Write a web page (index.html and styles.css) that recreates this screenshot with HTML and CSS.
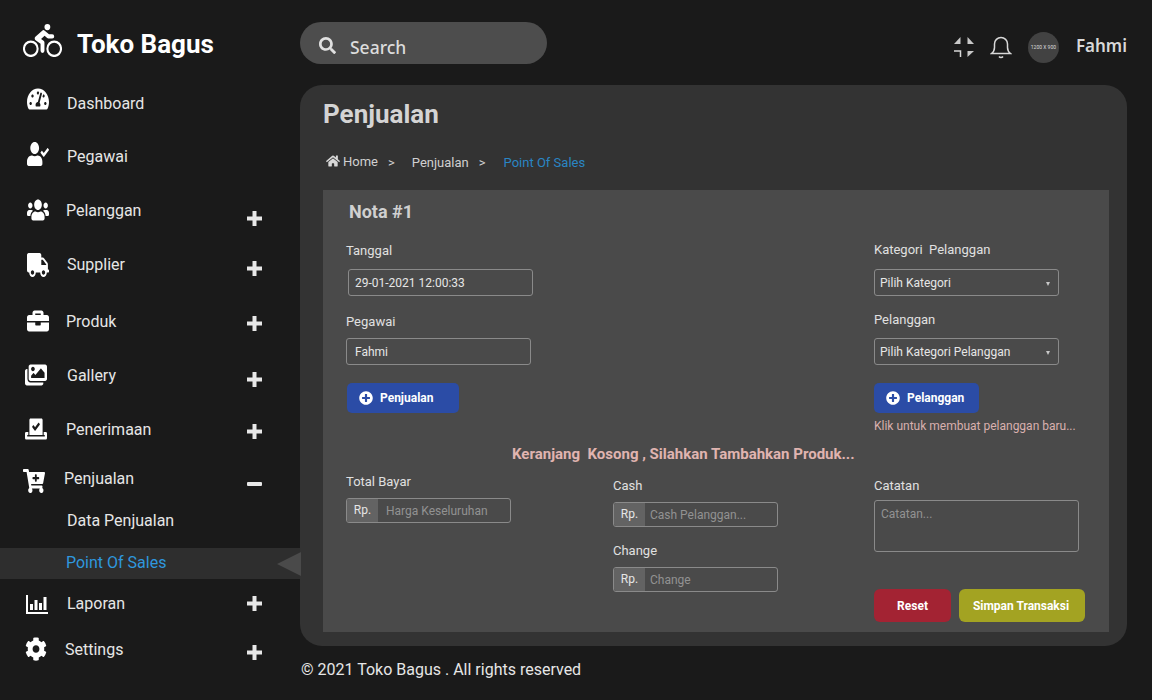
FILE: index.html
```html
<!DOCTYPE html>
<html lang="en">
<head>
  <meta charset="UTF-8">
  <meta name="viewport" content="width=device-width, initial-scale=1.0">
  <title>Toko Bagus - Point Of Sales</title>
  <link rel="stylesheet" href="styles.css">
</head>
<body>
  <svg class="sprites" aria-hidden="true">
    <symbol id="plus" viewBox="0 0 16 16"><path d="M6.500 1h4v5.500H16v4h-5.500V16h-4v-5.500H1v-4h5.500z"/></symbol>
    <symbol id="minus" viewBox="0 0 16 16"><rect x="1" y="6" width="15" height="4" rx="1"/></symbol>
    <symbol id="plus-circle" viewBox="0 0 512 512"><path d="M256 8C119 8 8 119 8 256s111 248 248 248 248-111 248-248S393 8 256 8zm144 276c0 6.6-5.4 12-12 12h-92v92c0 6.6-5.4 12-12 12h-56c-6.6 0-12-5.4-12-12v-92h-92c-6.6 0-12-5.4-12-12v-56c0-6.6 5.4-12 12-12h92v-92c0-6.6 5.4-12 12-12h56c6.6 0 12 5.4 12 12v92h92c6.6 0 12 5.4 12 12v56z"/></symbol>
  </svg>

  <div class="app">
    <aside class="sidebar">
      <div class="brand">
        <svg class="brand-icon" viewBox="0 0 640 512" preserveAspectRatio="none">
          <path d="M400 96a48 48 0 1 0-48-48 48 48 0 0 0 48 48zm-4 121a31.9 31.9 0 0 0 20 7h64a32 32 0 0 0 0-64h-52.78L356 103a31.94 31.94 0 0 0-40.81.68l-112 96a32 32 0 0 0 3.08 50.92L288 305.12V416a32 32 0 0 0 64 0V288a32 32 0 0 0-14.25-26.62l-41.36-27.57 58.25-49.92z"/>
          <circle class="brand-wheel" cx="128" cy="384" r="112"/>
          <circle class="brand-wheel" cx="512" cy="384" r="112"/>
        </svg>
        <span class="brand-name">Toko Bagus</span>
      </div>

      <nav class="nav">
        <a class="nav-item nav-dashboard">
          <svg class="nav-icon" viewBox="0 0 576 512" preserveAspectRatio="none"><path d="M288 32C128.94 32 0 160.94 0 320c0 52.8 14.25 102.26 39.06 144.8 5.61 9.62 16.3 15.2 27.44 15.2h443c11.14 0 21.83-5.58 27.44-15.2C561.75 422.26 576 372.8 576 320c0-159.06-128.94-288-288-288zm0 64c14.71 0 26.58 10.13 30.32 23.65-1.11 2.26-2.64 4.23-3.45 6.67l-9.22 27.67c-5.13 3.49-10.97 6.01-17.64 6.01-17.67 0-32-14.33-32-32S270.33 96 288 96zM96 384c-17.67 0-32-14.33-32-32s14.33-32 32-32 32 14.33 32 32-14.33 32-32 32zm48-160c-17.67 0-32-14.33-32-32s14.33-32 32-32 32 14.33 32 32-14.33 32-32 32zm246.77-72.41l-61.33 184C343.13 347.33 352 364.54 352 384c0 11.72-3.38 22.55-8.88 32H232.88c-5.5-9.45-8.88-20.28-8.88-32 0-33.94 26.5-61.43 59.9-63.59l61.34-184.01c4.17-12.56 17.73-19.45 30.36-15.17 12.57 4.19 19.35 17.79 15.17 30.36zm14.66 57.2l15.52-46.55c3.47-1.29 7.13-2.23 11.05-2.23 17.67 0 32 14.33 32 32s-14.33 32-32 32c-11.38-.01-20.89-6.28-26.57-15.22zM480 384c-17.67 0-32-14.33-32-32s14.33-32 32-32 32 14.33 32 32-14.33 32-32 32z"/></svg>
          <span class="nav-label">Dashboard</span>
        </a>
        <a class="nav-item nav-pegawai">
          <svg class="nav-icon" viewBox="0 0 640 512" preserveAspectRatio="none"><path d="M224 256c70.7 0 128-57.3 128-128S294.7 0 224 0 96 57.3 96 128s57.3 128 128 128zm89.6 32h-16.7c-22.2 10.2-46.9 16-72.9 16s-50.6-5.8-72.9-16h-16.7C60.2 288 0 348.2 0 422.4V464c0 26.5 21.5 48 48 48h352c26.5 0 48-21.5 48-48v-41.6c0-74.2-60.2-134.4-134.4-134.4zm323-128.4l-27.8-28.1c-4.6-4.7-12.1-4.7-16.8-.1l-104.8 104-45.5-45.8c-4.6-4.7-12.1-4.7-16.8-.1l-28.1 27.9c-4.7 4.6-4.7 12.1-.1 16.8l81.7 82.3c4.6 4.7 12.1 4.7 16.8.1l141.3-140.2c4.6-4.7 4.7-12.2.1-16.8z"/></svg>
          <span class="nav-label">Pegawai</span>
        </a>
        <a class="nav-item nav-pelanggan">
          <svg class="nav-icon" viewBox="0 0 640 512" preserveAspectRatio="none"><path d="M96 224c35.3 0 64-28.7 64-64s-28.7-64-64-64-64 28.7-64 64 28.7 64 64 64zm448 0c35.3 0 64-28.7 64-64s-28.7-64-64-64-64 28.7-64 64 28.7 64 64 64zm32 32h-64c-17.6 0-33.5 7.1-45.1 18.6 40.3 22.1 68.9 62 75.1 109.4h66c17.7 0 32-14.3 32-32v-32c0-35.3-28.7-64-64-64zm-256 0c61.9 0 112-50.1 112-112S381.9 32 320 32 208 82.1 208 144s50.1 112 112 112zm76.8 32h-8.3c-20.8 10-43.9 16-68.5 16s-47.6-6-68.5-16h-8.3C179.6 288 128 339.6 128 403.2V432c0 26.5 21.5 48 48 48h288c26.5 0 48-21.5 48-48v-28.8c0-63.6-51.6-115.2-115.2-115.2zm-223.7-13.4C161.5 263.1 145.6 256 128 256H64c-35.3 0-64 28.7-64 64v32c0 17.7 14.3 32 32 32h65.9c6.3-47.4 34.9-87.3 75.2-109.4z"/></svg>
          <span class="nav-label">Pelanggan</span>
          <svg class="nav-toggle"><use href="#plus"/></svg>
        </a>
        <a class="nav-item nav-supplier">
          <svg class="nav-icon" viewBox="0 0 640 512" preserveAspectRatio="none"><path d="M624 352h-16V243.9c0-12.7-5.1-24.9-14.1-33.9L494 110.1c-9-9-21.2-14.1-33.9-14.1H416V48c0-26.5-21.5-48-48-48H48C21.5 0 0 21.5 0 48v320c0 26.5 21.5 48 48 48h16c0 53 43 96 96 96s96-43 96-96h128c0 53 43 96 96 96s96-43 96-96h48c8.8 0 16-7.2 16-16v-32c0-8.8-7.2-16-16-16zM160 464c-26.5 0-48-21.5-48-48s21.5-48 48-48 48 21.5 48 48-21.5 48-48 48zm320 0c-26.5 0-48-21.5-48-48s21.5-48 48-48 48 21.5 48 48-21.5 48-48 48zm80-208H416V144h44.1l99.9 99.9V256z"/></svg>
          <span class="nav-label">Supplier</span>
          <svg class="nav-toggle"><use href="#plus"/></svg>
        </a>
        <a class="nav-item nav-produk">
          <svg class="nav-icon" viewBox="0 0 512 512" preserveAspectRatio="none"><path d="M320 336c0 8.84-7.16 16-16 16h-96c-8.84 0-16-7.16-16-16v-48H0v144c0 25.6 22.4 48 48 48h416c25.6 0 48-22.4 48-48V288H320v48zm144-208h-80V80c0-25.6-22.4-48-48-48H176c-25.6 0-48 22.4-48 48v48H48c-25.6 0-48 22.4-48 48v80h512v-80c0-25.6-22.4-48-48-48zm-144 0H192V96h128v32z"/></svg>
          <span class="nav-label">Produk</span>
          <svg class="nav-toggle"><use href="#plus"/></svg>
        </a>
        <a class="nav-item nav-gallery">
          <svg class="nav-icon" viewBox="0 0 576 512" preserveAspectRatio="none"><path d="M480 416v16c0 26.51-21.49 48-48 48H48c-26.51 0-48-21.49-48-48V176c0-26.51 21.49-48 48-48h16v208c0 44.112 35.888 80 80 80h336zm96-80V80c0-26.51-21.49-48-48-48H144c-26.51 0-48 21.49-48 48v256c0 26.51 21.49 48 48 48h384c26.51 0 48-21.49 48-48zM256 128c0 26.51-21.49 48-48 48s-48-21.49-48-48 21.49-48 48-48 48 21.49 48 48zm-96 144l55.515-55.515c4.686-4.686 12.284-4.686 16.971 0L272 256l135.515-135.515c4.686-4.686 12.284-4.686 16.971 0L512 208v112H160v-48z"/></svg>
          <span class="nav-label">Gallery</span>
          <svg class="nav-toggle"><use href="#plus"/></svg>
        </a>
        <a class="nav-item nav-penerimaan">
          <svg class="nav-icon" viewBox="0 0 640 512" preserveAspectRatio="none"><path d="M608 320h-64v64h22.4c5.3 0 9.6 3.6 9.6 8v16c0 4.4-4.3 8-9.6 8H73.6c-5.3 0-9.6-3.6-9.6-8v-16c0-4.4 4.3-8 9.6-8H96v-64H32c-17.7 0-32 14.3-32 32v96c0 17.7 14.3 32 32 32h576c17.7 0 32-14.3 32-32v-96c0-17.7-14.3-32-32-32zm-96 64V64.3c0-17.9-14.5-32.3-32.3-32.3H160.4C142.5 32 128 46.5 128 64.3V384h384zM211.2 202l25.5-25.3c4.2-4.2 11-4.2 15.2.1l41.3 41.6 95.2-94.4c4.2-4.2 11-4.2 15.2.1l25.3 25.5c4.2 4.2 4.2 11-.1 15.2L300.5 292c-4.2 4.2-11 4.2-15.2-.1l-74.1-74.7c-4.2-4.2-4.2-11 0-15.2z"/></svg>
          <span class="nav-label">Penerimaan</span>
          <svg class="nav-toggle"><use href="#plus"/></svg>
        </a>
        <a class="nav-item nav-penjualan">
          <svg class="nav-icon" viewBox="0 0 576 512" preserveAspectRatio="none"><path d="M504.717 320H211.572l6.545 32h268.418c15.401 0 26.816 14.301 23.403 29.319l-5.517 24.276C523.112 414.668 536 433.828 536 456c0 31.202-25.519 56.444-56.824 55.994-29.823-.429-54.35-24.631-55.155-54.447-.44-16.287 6.085-31.049 16.803-41.548H231.176C241.553 426.165 248 440.326 248 456c0 31.813-26.528 57.431-58.67 55.938-28.54-1.325-51.751-24.385-53.251-52.917-1.158-22.034 10.436-41.455 28.051-51.586L93.883 64H24C10.745 64 0 53.255 0 40V24C0 10.745 10.745 0 24 0h102.529c11.401 0 21.228 8.021 23.513 19.19L159.208 64H551.99c15.401 0 26.816 14.301 23.403 29.319l-47.273 208C525.637 312.246 515.923 320 504.717 320zM408 168h-48v-40c0-8.837-7.163-16-16-16h-16c-8.837 0-16 7.163-16 16v40h-48c-8.837 0-16 7.163-16 16v16c0 8.837 7.163 16 16 16h48v40c0 8.837 7.163 16 16 16h16c8.837 0 16-7.163 16-16v-40h48c8.837 0 16-7.163 16-16v-16c0-8.837-7.163-16-16-16z"/></svg>
          <span class="nav-label">Penjualan</span>
          <svg class="nav-toggle"><use href="#minus"/></svg>
        </a>
        <a class="nav-item nav-sub">Data Penjualan</a>
        <a class="nav-item nav-active">Point Of Sales</a>
        <a class="nav-item nav-laporan">
          <svg class="nav-icon" viewBox="0 0 22 19"><path d="M0 0h2v17h20v2H0z"/><path d="M4 9h3v6H4zM8.500 5h3v10h-3zM13 8h3v7h-3zM17.500 2h3v13h-3z"/></svg>
          <span class="nav-label">Laporan</span>
          <svg class="nav-toggle"><use href="#plus"/></svg>
        </a>
        <a class="nav-item nav-settings">
          <svg class="nav-icon" viewBox="0 0 512 512" preserveAspectRatio="none"><path d="M487.4 315.7l-42.6-24.6c4.300-23.200 4.300-47 0-70.200l42.600-24.600c4.900-2.800 7.100-8.600 5.500-14-11.100-35.600-30-67.800-54.700-94.600-3.800-4.100-10-5.100-14.800-2.300L380.800 110c-17.900-15.400-38.500-27.300-60.800-35.100V25.800c0-5.600-3.900-10.500-9.400-11.700-36.700-8.200-74.300-7.800-109.200 0-5.500 1.200-9.400 6.100-9.400 11.700V75c-22.200 7.900-42.800 19.800-60.800 35.100L88.700 85.500c-4.900-2.800-11-1.900-14.800 2.300-24.700 26.700-43.600 58.900-54.700 94.600-1.700 5.400.6 11.200 5.500 14L67.300 221c-4.300 23.200-4.300 47 0 70.200l-42.600 24.600c-4.900 2.800-7.100 8.600-5.500 14 11.100 35.600 30 67.800 54.700 94.600 3.800 4.100 10 5.100 14.800 2.300l42.600-24.600c17.900 15.400 38.500 27.300 60.800 35.100v49.200c0 5.600 3.900 10.500 9.400 11.700 36.700 8.200 74.300 7.800 109.200 0 5.500-1.200 9.400-6.100 9.400-11.700v-49.200c22.200-7.900 42.800-19.800 60.800-35.100l42.600 24.600c4.900 2.800 11 1.900 14.800-2.300 24.700-26.700 43.600-58.900 54.700-94.600 1.500-5.500-.7-11.300-5.600-14.100zM256 336c-44.100 0-80-35.900-80-80s35.900-80 80-80 80 35.900 80 80-35.900 80-80 80z"/></svg>
          <span class="nav-label">Settings</span>
          <svg class="nav-toggle"><use href="#plus"/></svg>
        </a>
      </nav>
    </aside>

    <div class="main">
      <header class="topbar">
        <div class="search">
          <svg class="search-icon" viewBox="0 0 512 512"><path d="M505 442.700L405.300 343c-4.500-4.500-10.600-7-17-7H372c27.600-35.300 44-79.700 44-128C416 93.100 322.900 0 208 0S0 93.100 0 208s93.100 208 208 208c48.300 0 92.700-16.400 128-44v16.300c0 6.400 2.500 12.500 7 17l99.700 99.700c9.400 9.400 24.600 9.400 33.900 0l28.300-28.300c9.400-9.400 9.400-24.600.1-34zM208 336c-70.700 0-128-57.200-128-128 0-70.700 57.200-128 128-128 70.700 0 128 57.200 128 128 0 70.700-57.200 128-128 128z"/></svg>
          <span class="search-text">Search</span>
        </div>
        <div class="topbar-right">
          <svg class="top-icon" viewBox="0 0 22 22">
            <path class="compress-fill" d="M7.500 1v7H1z"/>
            <path class="compress-fill" d="M14.500 1v7H21z"/>
            <path class="compress-line" d="M1 15h6.500v6"/>
            <path class="compress-fill" d="M14.500 21v-6H21z"/>
          </svg>
          <svg class="top-icon bell" viewBox="0 0 22 24">
            <path class="bell-line" d="M1.500 18.500c2-1.500 3-3 3-6V9a6.500 6.500 0 0 1 13 0v3.500c0 3 1 4.500 3 6z"/>
            <path class="bell-line" d="M9 21.500c1 1.300 3 1.300 4 0"/>
          </svg>
          <div class="avatar">1200 X 900</div>
          <span class="user-name">Fahmi</span>
        </div>
      </header>

      <main class="panel">
        <h1 class="page-title">Penjualan</h1>
        <div class="breadcrumb">
          <svg class="home-icon" viewBox="0 0 576 512"><path d="M280.370 148.260L96 300.110V464a16 16 0 0 0 16 16l112.060-.290a16 16 0 0 0 15.920-16V368a16 16 0 0 1 16-16h64a16 16 0 0 1 16 16v95.640a16 16 0 0 0 16 16.050L464 480a16 16 0 0 0 16-16V300L295.670 148.260a12.190 12.190 0 0 0-15.300 0zM571.600 251.470L488 182.560V44.050a12 12 0 0 0-12-12h-56a12 12 0 0 0-12 12v72.610L318.470 43a48 48 0 0 0-61 0L4.340 251.470a12 12 0 0 0-1.600 16.900l25.500 31A12 12 0 0 0 45.150 301l235.220-193.740a12.190 12.190 0 0 1 15.300 0L530.900 301a12 12 0 0 0 16.900-1.600l25.500-31a12 12 0 0 0-1.700-16.930z"/></svg>
          <span class="crumb-home">Home</span>
          <span class="crumb-sep crumb-sep-first">&gt;</span>
          <span class="crumb">Penjualan</span>
          <span class="crumb-sep">&gt;</span>
          <span class="crumb crumb-current">Point Of Sales</span>
        </div>

        <section class="card">
          <h2 class="card-title">Nota #1</h2>

          <div class="form-top">
            <div class="col-left">
              <label class="field-label label-tanggal">Tanggal</label>
              <input class="text-input input-tanggal" type="text" value="29-01-2021 12:00:33">
              <label class="field-label label-pegawai">Pegawai</label>
              <input class="text-input" type="text" value="Fahmi">
              <button class="btn btn-blue btn-penjualan" type="button">
                <svg class="btn-icon"><use href="#plus-circle"/></svg>Penjualan
              </button>
            </div>
            <div class="col-right">
              <label class="field-label label-kategori">Kategori&nbsp; Pelanggan</label>
              <div class="select-box"><span>Pilih Kategori</span></div>
              <label class="field-label label-pelanggan">Pelanggan</label>
              <div class="select-box"><span>Pilih Kategori Pelanggan</span></div>
              <button class="btn btn-blue btn-pelanggan" type="button">
                <svg class="btn-icon"><use href="#plus-circle"/></svg>Pelanggan
              </button>
              <p class="hint">Klik untuk membuat pelanggan baru...</p>
            </div>
          </div>

          <p class="empty-note">Keranjang&nbsp; Kosong , Silahkan Tambahkan Produk...</p>

          <div class="form-bottom">
            <div class="col-total">
              <label class="field-label">Total Bayar</label>
              <div class="money-input">
                <span class="money-prefix">Rp.</span>
                <input type="text" placeholder="Harga Keseluruhan">
              </div>
            </div>
            <div class="col-cash">
              <label class="field-label">Cash</label>
              <div class="money-input">
                <span class="money-prefix">Rp.</span>
                <input type="text" placeholder="Cash Pelanggan...">
              </div>
              <label class="field-label label-change">Change</label>
              <div class="money-input">
                <span class="money-prefix">Rp.</span>
                <input type="text" placeholder="Change">
              </div>
            </div>
            <div class="col-note">
              <label class="field-label">Catatan</label>
              <textarea class="note-input" placeholder="Catatan..."></textarea>
              <div class="actions">
                <button class="btn btn-reset" type="button">Reset</button>
                <button class="btn btn-save" type="button">Simpan Transaksi</button>
              </div>
            </div>
          </div>
        </section>
      </main>

      <footer class="footer">© 2021 Toko Bagus . All rights reserved</footer>
    </div>
  </div>
</body>
</html>
```

FILE: styles.css
```css
* {
  box-sizing: border-box;
}
body {
  margin: 0;
  height: 700px;
  overflow: hidden;
  background-color: #1a1a1a;
  color: #e6e6e6;
  font-family: Roboto, "Liberation Sans", sans-serif;
  font-size: 16px;
}
.sprites {
  display: none;
}
.app {
  display: flex;
  height: 700px;
}

/* sidebar */
.sidebar {
  width: 300px;
  flex-shrink: 0;
}
.brand {
  display: flex;
  align-items: center;
  height: 33px;
  margin: 24px 0 0 23px;
}
.brand-icon {
  width: 39px;
  height: 33px;
  fill: #fff;
  margin-right: 15px;
}
.brand-wheel {
  fill: none;
  stroke: #fff;
  stroke-width: 34;
}
.brand-name {
  margin-top: 6px;
  color: #fff;
  font-size: 26px;
  font-weight: 700;
}
.nav {
  display: flex;
  flex-direction: column;
  padding-top: 31px;
}
.nav-item {
  position: relative;
  display: flex;
  align-items: center;
  height: 30px;
  margin-top: 24px;
  padding-right: 38px;
  color: #e6e6e6;
}
.nav-icon {
  width: 22px;
  height: 24px;
  flex-shrink: 0;
  fill: #fff;
}
.nav-toggle {
  width: 16px;
  height: 16px;
  margin-left: auto;
  fill: #e8e8e8;
}

.nav-dashboard { margin-top: 0; padding-left: 27px; }
.nav-dashboard .nav-icon { margin-top: -9px; }
.nav-pegawai .nav-icon { margin-top: -4px; }
.nav-dashboard .nav-label,
.nav-pegawai .nav-label,
.nav-supplier .nav-label { margin-left: 18px; }

.nav-pegawai { margin-top: 23px; padding-left: 27px; }
.nav-pelanggan { padding-left: 27px; }
.nav-pelanggan .nav-label { margin-left: 17px; }
.nav-pelanggan .nav-toggle { margin-top: 16px; }
.nav-supplier { padding-left: 27px; }
.nav-supplier .nav-icon { margin-top: 2px; }
.nav-supplier .nav-toggle { margin-top: 8px; }
.nav-produk { margin-top: 27px; padding-left: 27px; }
.nav-produk .nav-label { margin-left: 17px; }
.nav-produk .nav-toggle { margin-top: 4px; }
.nav-gallery { padding-left: 25px; }
.nav-gallery .nav-label { margin-left: 20px; }
.nav-gallery .nav-toggle { margin-top: 8px; }
.nav-penerimaan { padding-left: 25px; }
.nav-penerimaan .nav-label { margin-left: 19px; }
.nav-penerimaan .nav-toggle { margin-top: 4px; }
.nav-penjualan { margin-top: 19px; padding-left: 23px; }
.nav-penjualan .nav-icon { margin-top: 6px; }
.nav-penjualan .nav-label { margin-left: 19px; }
.nav-penjualan .nav-toggle { margin-top: 12px; }
.nav-sub { margin-top: 12px; padding-left: 67px; }
.nav-active {
  height: 31px;
  margin-top: 13px;
  padding-left: 66px;
  padding-bottom: 2px;
  background-color: #2e2e2e;
  color: #2f97de;
}
/* little arrow that points from the panel at the open page */
.nav-active::after {
  content: "";
  position: absolute;
  top: 4px;
  right: -1px;
  border-style: solid;
  border-width: 12.5px 24px 12.5px 0;
  border-color: transparent #4a4a4a transparent transparent;
}
.nav-laporan { margin-top: 9px; padding-left: 26px; }
.nav-laporan .nav-icon { height: 19px; margin-top: 2px; }
.nav-laporan .nav-label { margin-left: 19px; }
.nav-settings { margin-top: 16px; padding-left: 25px; }
.nav-settings .nav-label { margin-left: 18px; }
.nav-settings .nav-toggle { margin-top: 6px; }

/* top bar */
.main {
  flex: 1;
  min-width: 0;
  padding-right: 25px;
}
.topbar {
  display: flex;
  align-items: flex-start;
  justify-content: space-between;
  height: 85px;
  padding-top: 22px;
}
.search {
  display: flex;
  align-items: center;
  width: 247px;
  height: 42px;
  padding-left: 19px;
  border-radius: 21px;
  background-color: #4d4d4d;
}
.search-icon {
  width: 17px;
  height: 17px;
  margin-top: 4px;
  fill: #e0e0e0;
}
.search-text {
  margin: 7px 0 0 14px;
  color: #dcdcdc;
  font-family: "Noto Sans", sans-serif;
  font-size: 17.500px;
  font-weight: 500;
}
.topbar-right {
  display: flex;
  align-items: center;
  height: 40px;
  margin-top: 5px;
}
.top-icon {
  width: 22px;
  height: 22px;
}
.compress-fill {
  fill: #c8c8c8;
}
.compress-line,
.bell-line {
  fill: none;
  stroke: #d8d8d8;
  stroke-width: 1.500;
}
.bell {
  height: 24px;
  margin-left: 15px;
}
.avatar {
  display: flex;
  align-items: center;
  justify-content: center;
  width: 31px;
  height: 31px;
  margin-left: 16px;
  border-radius: 50%;
  background-color: #424242;
  color: #ddd;
  font-size: 5px;
  white-space: nowrap;
}
.user-name {
  margin: -3px 0 0 17px;
  color: #d8d8d8;
  font-family: "Noto Sans", sans-serif;
  font-size: 17px;
  font-weight: 600;
}

/* panel */
.panel {
  height: 561px;
  padding: 0 18px 0 23px;
  border-radius: 22px;
  background-color: #333;
}
.page-title {
  margin: 0;
  padding-top: 12px;
  color: #d4d4d4;
  font-size: 26px;
  font-weight: 700;
  line-height: 34px;
}
.breadcrumb {
  display: flex;
  align-items: center;
  height: 20px;
  margin-top: 21px;
  padding-left: 3px;
  font-size: 13px;
  color: #d0d0d0;
}
.home-icon {
  width: 14px;
  height: 14px;
  fill: #d8d8d8;
  margin-top: -3px;
}
.crumb-home {
  margin: -2px 0 0 3px;
}
.crumb-sep {
  margin: 0 18px 0 10px;
}
.crumb-sep-first {
  margin-right: 17px;
}
.crumb-current {
  color: #2a86c4;
}

/* form card */
.card {
  height: 442px;
  margin-top: 18px;
  padding-left: 23px;
  background-color: #4a4a4a;
  font-size: 13px;
}
.card-title {
  margin: 0;
  padding: 12px 0 0 3px;
  color: #d0d0d0;
  font-size: 18px;
  font-weight: 700;
  line-height: 20px;
}
.field-label {
  display: block;
  height: 18px;
  color: #e0e0e0;
  font-size: 13px;
  line-height: 18px;
}
.form-top {
  display: flex;
  margin-top: 20px;
}
.col-left {
  width: 528px;
}
.col-right {
  width: 205px;
}
.text-input {
  display: block;
  width: 185px;
  height: 27px;
  padding: 0 8px;
  border: 1px solid #8a8a8a;
  border-radius: 3px;
  background: transparent;
  color: #e6e6e6;
  font-family: Roboto, sans-serif;
  font-size: 12px;
}
.input-tanggal {
  margin: 9px 0 0 2px;
  padding-left: 6px;
}
.label-pegawai {
  margin-top: 17px;
}
.label-pegawai + .text-input {
  margin-top: 7px;
}
.btn {
  display: inline-flex;
  align-items: center;
  border: none;
  border-radius: 5px;
  color: #fff;
  font-family: Roboto, sans-serif;
  font-size: 12px;
  font-weight: 700;
}
.btn-blue {
  height: 30px;
  margin-top: 18px;
  padding: 0 0 0 12px;
  background-color: #2b4ca6;
}
.btn-penjualan {
  width: 112px;
  margin-left: 1px;
}
.btn-pelanggan {
  width: 105px;
}
.btn-icon {
  width: 14px;
  height: 14px;
  margin-right: 7px;
  fill: #fff;
}
.label-kategori {
  margin-top: -1px;
}
.select-box {
  position: relative;
  display: flex;
  align-items: center;
  width: 185px;
  height: 27px;
  margin-top: 10px;
  padding-left: 5px;
  border: 1px solid #8a8a8a;
  border-radius: 3px;
  color: #e6e6e6;
  font-size: 12px;
}
.select-box::after {
  content: "";
  position: absolute;
  top: 12px;
  right: 8px;
  border-style: solid;
  border-width: 4px 2.500px 0;
  border-color: #c8c8c8 transparent transparent;
}
.label-pelanggan {
  margin-top: 15px;
}
.label-pelanggan + .select-box {
  margin-top: 9px;
}
.hint {
  margin: 6px 0 0;
  color: #d9b0ae;
  font-size: 12px;
  line-height: 14px;
}
.empty-note {
  margin: 12px 0 0 166px;
  color: #e0b4b0;
  font-size: 15px;
  font-weight: 700;
  line-height: 18px;
}
.form-bottom {
  display: flex;
  margin-top: 10px;
}
.col-total {
  width: 267px;
}
.col-cash {
  width: 261px;
  padding-top: 4px;
}
.col-note {
  padding-top: 4px;
}
.money-input {
  display: flex;
  width: 165px;
  height: 25px;
  margin-top: 7px;
  border: 1px solid #8a8a8a;
  border-radius: 3px;
  overflow: hidden;
}
.money-prefix {
  width: 31px;
  flex-shrink: 0;
  background-color: #636363;
  color: #e6e6e6;
  font-size: 12px;
  line-height: 23px;
  text-align: center;
}
.money-input input {
  flex: 1;
  min-width: 0;
  padding: 0 0 0 5px;
  border: none;
  background: transparent;
  font-family: Roboto, sans-serif;
  font-size: 12px;
}
.col-total .money-input input {
  padding-left: 8px;
}
.money-input input::placeholder,
.note-input::placeholder {
  color: #929292;
  opacity: 1;
}
.label-change {
  margin-top: 15px;
}
.note-input {
  display: block;
  width: 205px;
  height: 52px;
  margin-top: 5px;
  padding: 6px;
  border: 1px solid #8a8a8a;
  border-radius: 3px;
  background: transparent;
  font-family: Roboto, sans-serif;
  font-size: 12px;
  resize: none;
}
.actions {
  display: flex;
  gap: 8px;
  margin-top: 37px;
}
.btn-reset,
.btn-save {
  justify-content: center;
  height: 33px;
  border-radius: 6px;
}
.btn-reset {
  width: 77px;
  background-color: #a32333;
}
.btn-save {
  width: 126px;
  padding: 0 2px 0 0;
  background-color: #a3a322;
}

/* footer */
.footer {
  margin-top: 14px;
  padding-left: 1px;
  color: #e6e6e6;
  line-height: 19px;
}
```
